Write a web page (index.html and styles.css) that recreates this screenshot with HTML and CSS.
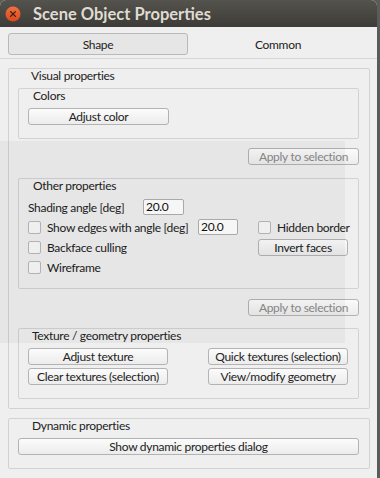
FILE: index.html
```html
<!DOCTYPE html>
<html lang="en">
<head>
  <meta charset="utf-8" />
  <title>Scene Object Properties</title>
  <link rel="stylesheet" href="styles.css">
</head>
<body>
  <div class="window">
    <div class="titlebar">
      <svg class="close" width="16" height="16" viewBox="0 0 16 16">
        <defs>
          <linearGradient id="cg" x1="0" y1="0" x2="0" y2="1">
            <stop offset="0" stop-color="#f3703f"/>
            <stop offset="1" stop-color="#d9491a"/>
          </linearGradient>
        </defs>
        <circle cx="8" cy="8" r="7.5" fill="url(#cg)"/>
        <path d="M5.6 5.6 L10.4 10.4 M10.4 5.6 L5.6 10.4" stroke="#3a1c10" stroke-width="1.3" stroke-linecap="round"/>
      </svg>
      <span class="title">Scene Object Properties</span>
    </div>

    <div class="tabs">
      <div class="tab active">Shape</div>
      <div class="tab">Common</div>
    </div>

    <div class="page">
      <div class="group visual">
        <div class="group-title">Visual properties</div>

        <div class="box colors">
          <div class="box-title">Colors</div>
          <button class="btn w141">Adjust color</button>
        </div>

        <div class="apply-row"><button class="btn apply" disabled>Apply to selection</button></div>

        <div class="box other">
          <div class="box-title">Other properties</div>
          <div class="row">
            <span class="cell c115">Shading angle [deg]</span>
            <span class="input w41">20.0</span>
          </div>
          <div class="row">
            <label class="cell c170"><span class="check"></span>Show edges with angle [deg]</label>
            <span class="input w40">20.0</span>
            <label class="cell hidden"><span class="check"></span>Hidden border</label>
          </div>
          <div class="row">
            <label class="cell c230"><span class="check"></span>Backface culling</label>
            <button class="btn w90">Invert faces</button>
          </div>
          <div class="row">
            <label class="cell"><span class="check"></span>Wireframe</label>
          </div>
        </div>

        <div class="apply-row second"><button class="btn apply" disabled>Apply to selection</button></div>

        <div class="box texture">
          <div class="box-title tex">Texture / geometry properties</div>
          <div class="btn-grid">
            <button class="btn">Adjust texture</button>
            <button class="btn">Quick textures (selection)</button>
            <button class="btn">Clear textures (selection)</button>
            <button class="btn">View/modify geometry</button>
          </div>
        </div>
      </div>

      <div class="group dynamic">
        <div class="group-title dyn">Dynamic properties</div>
        <button class="btn full">Show dynamic properties dialog</button>
      </div>
    </div>

    <div class="shade"></div>
  </div>
</body>
</html>
```

FILE: styles.css
```css
body {
  margin: 0;
  background: #5b5b5b;
  font-family: Lato, "Open Sans", sans-serif;
  font-size: 12px;
  letter-spacing: -0.3px;
  color: #222;
}
.window {
  position: relative;
  width: 377px;
  height: 478px;
  background: #efefef;
  border-radius: 6px 6px 0 0;
  overflow: hidden;
}
.titlebar {
  height: 27px;
  background: linear-gradient(#55534d, #3c3b37);
  display: flex;
  align-items: center;
  padding-left: 5px;
}
.close {
  display: block;
}
.title {
  margin-left: 12px;
  color: #dfdbd2;
  font-weight: bold;
  font-size: 16.5px;
  letter-spacing: 0;
}
.tabs {
  display: flex;
  padding: 6px 8px 3px;
  border-bottom: 1px solid #d6d6d6;
}
.tab {
  width: 180px;
  height: 22px;
  box-sizing: border-box;
  display: flex;
  align-items: center;
  justify-content: center;
  color: #222;
}
.tab.active {
  background: #e6e6e6;
  border: 1px solid #b9b9b9;
  border-radius: 3px;
}
.page {
  padding: 9px 0 0 8px;
}
.group {
  width: 362px;
  box-sizing: border-box;
  border: 1px solid #d2d2d2;
  border-radius: 2px;
  padding: 0 10px 9px 9px;
}
.group-title {
  line-height: 14px;
  padding-left: 13px;
  color: #222;
}
.box {
  border: 1px solid #d2d2d2;
  border-radius: 2px;
  padding: 0 0 13px 9px;
}
.box-title {
  line-height: 14px;
  padding-left: 5px;
  color: #222;
}
.box-title.tex {
  padding-left: 4px;
}
.colors {
  margin-top: 5px;
}
.colors .btn {
  margin-top: 5px;
}
.btn {
  display: block;
  height: 17px;
  box-sizing: border-box;
  padding: 0;
  border: 1px solid #b3b3b3;
  border-radius: 3px;
  background: linear-gradient(#fbfbfb, #ececec);
  font-family: inherit;
  font-size: 12px;
  letter-spacing: -0.3px;
  color: #222;
  line-height: 15px;
  text-align: center;
}
.btn:disabled {
  color: #8a8a8a;
}
.w141 { width: 141px; }
.w90 { width: 90px; }
.apply-row {
  display: flex;
  justify-content: flex-end;
  margin-top: 9px;
}
.apply-row.second {
  margin-top: 10px;
}
.apply {
  width: 111px;
}
.other {
  margin-top: 13px;
  padding-bottom: 11px;
}
.other .box-title {
  margin-bottom: 4px;
}
.row {
  display: flex;
  align-items: center;
  height: 20px;
  color: #222;
}
.cell {
  display: flex;
  align-items: center;
  white-space: nowrap;
}
.c115 { width: 115px; }
.c170 { width: 170px; }
.c230 { width: 230px; }
.hidden { margin-left: 20px; }
.check {
  width: 13px;
  height: 13px;
  box-sizing: border-box;
  border: 1px solid #b9b9b9;
  border-radius: 2px;
  background: #f8f8f8;
  margin-right: 6px;
}
.input {
  height: 16px;
  box-sizing: border-box;
  border: 1px solid #b0b0b0;
  border-radius: 2px;
  background: #fff;
  padding-left: 2px;
  line-height: 14px;
  color: #111;
}
.w41 { width: 41px; }
.w40 { width: 40px; }
.texture {
  margin-top: 12px;
}
.btn-grid {
  display: grid;
  grid-template-columns: 140px 140px;
  column-gap: 40px;
  row-gap: 3px;
  margin-top: 5px;
}
.btn-grid .btn {
  width: 140px;
}
.dynamic {
  margin-top: 9px;
  padding-bottom: 13px;
}
.group-title.dyn {
  padding-left: 14px;
}
.full {
  width: 341px;
  margin-top: 5px;
}
.shade {
  position: absolute;
  left: 0;
  top: 141px;
  width: 345px;
  height: 202px;
  background: rgba(0, 0, 0, 0.035);
  pointer-events: none;
}
```
